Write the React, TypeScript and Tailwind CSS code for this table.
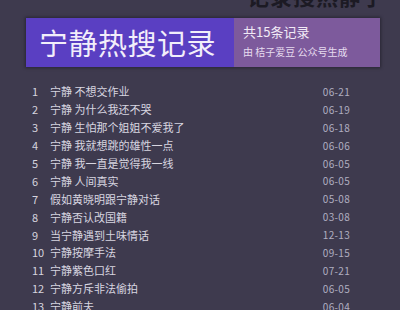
import React from "react";

const rows: [string, string][] = [
  ["宁静 不想交作业", "06-21"],
  ["宁静 为什么我还不哭", "06-19"],
  ["宁静 生怕那个姐姐不爱我了", "06-18"],
  ["宁静 我就想跳的雄性一点", "06-06"],
  ["宁静 我一直是觉得我一线", "06-05"],
  ["宁静 人间真实", "06-05"],
  ["假如黄晓明跟宁静对话", "05-08"],
  ["宁静否认改国籍", "03-08"],
  ["当宁静遇到土味情话", "12-13"],
  ["宁静按摩手法", "09-15"],
  ["宁静紫色口红", "07-21"],
  ["宁静方斥非法偷拍", "06-05"],
  ["宁静前夫", "06-04"],
];

export default function App() {
  return (
    <div
      className="w-[400px] h-[310px] overflow-hidden bg-[#3e3a4e]"
      style={{ fontFamily: '"Noto Sans CJK SC", "Noto Sans", sans-serif' }}
    >
      <div className="h-[18px] overflow-hidden relative">
        <div className="absolute right-[15px] bottom-[12px] text-[22px] leading-none font-bold text-[#1c1a24] tracking-[1px]">
          记录搜热静宁
        </div>
      </div>
      <div className="mx-[26px] w-[354px] h-[49px] flex shadow-[0_0_3px_1px_rgba(0,0,0,0.35)]">
        <div className="w-[208px] bg-[#5a3fc2] flex items-center pl-[13px]">
          <span className="text-[29px] leading-none text-[#f2eefa] tracking-[0.5px]">宁静热搜记录</span>
        </div>
        <div className="flex-1 bg-[#7d5a9c] pl-[9px] pt-[5px]">
          <div className="text-[13px] leading-[18px] text-[#f1eaf6]">共15条记录</div>
          <div className="text-[10px] leading-[14px] mt-[4px] text-[#e6dcef]">由 桔子爱豆 公众号生成</div>
        </div>
      </div>
      <div className="mt-[16px] pl-[31px] pr-[50px] flex flex-col">
        {rows.map(([t, d], i) => (
          <div key={i} className="h-[17.9px] flex items-center text-[11px] leading-none">
            <span className="w-[19px] text-[#d6d4de] pl-[1px]">{i + 1}</span>
            <span className="flex-1 text-[#d8d6e0]">{t}</span>
            <span className="text-[10px] text-[#b0aec0] tracking-[0.3px]">{d}</span>
          </div>
        ))}
      </div>
    </div>
  );
}
